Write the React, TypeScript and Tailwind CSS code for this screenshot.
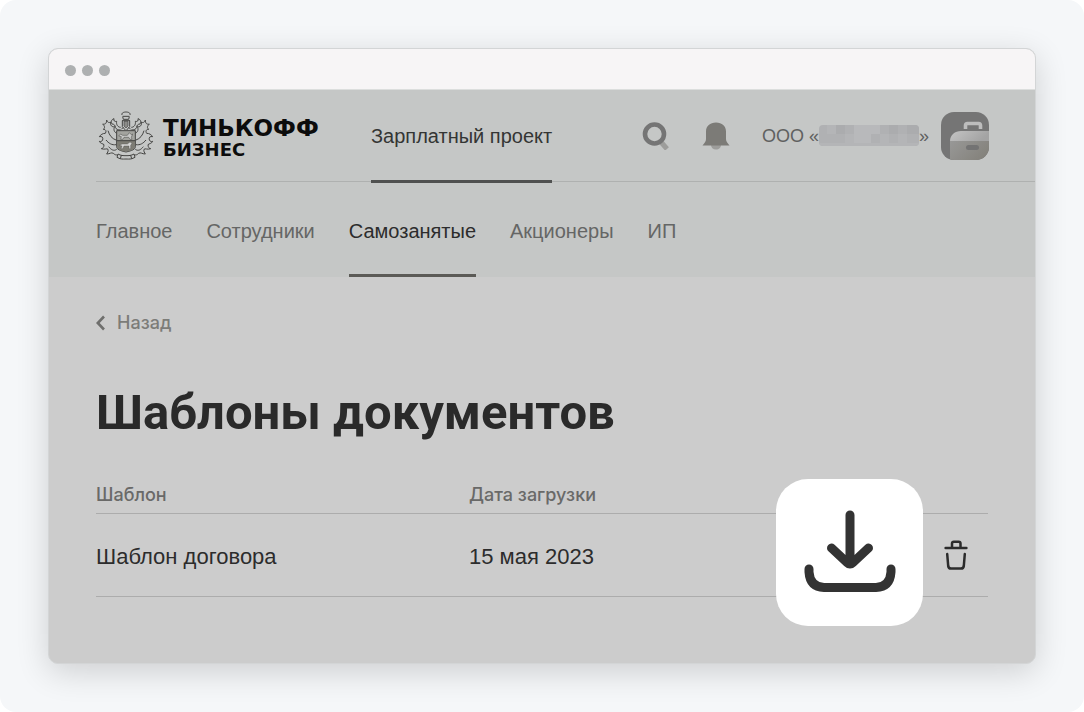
import React from "react";

const tabs = [
  { title: "Главное", active: false },
  { title: "Сотрудники", active: false },
  { title: "Самозанятые", active: true },
  { title: "Акционеры", active: false },
  { title: "ИП", active: false },
];

const templates = [{ name: "Шаблон договора", date: "15 мая 2023" }];

// left half of the crest, the right one is mirrored
const CrestHalf = () => (
  <g>
    <path d="M62 76C54 72 52 64 56 56C48 58 42 52 44 42C38 46 34 42 32 36C32 46 28 50 20 48C26 54 28 60 22 64C30 64 32 70 28 76C20 76 14 80 10 86C18 84 22 88 20 96C18 100 14 102 10 100C14 108 20 106 24 110C24 118 20 122 16 122C26 126 32 120 36 124C38 130 34 134 32 138C42 138 46 132 52 136C56 140 60 142 64 140" />
    <path d="M60 96C48 92 40 82 36 68M60 110C48 112 38 106 30 96M62 124C54 130 46 126 38 116" />
    <path d="M74 58C66 58 60 50 62 40C56 42 52 38 54 32C46 34 44 42 48 48C54 48 58 52 58 58C60 64 66 66 74 66" />
    <path d="M80 26L82 34H90M78 38H90M79 38V56L88 66M76 64L82 58" />
    <path d="M78 21C76 14 84 12 90 12M80 25H90" />
    <path d="M66 138C74 143 82 143 90 143M66 138L63 148L72 152C80 154 86 153 90 153M76 142L73 152" />
  </g>
);

const Crest = () => (
  <svg
    viewBox="0 0 180 168"
    className="w-15 h-14 shrink-0"
    fill="none"
    stroke="#444442"
    strokeWidth="3"
    aria-hidden="true"
  >
    <CrestHalf />
    <g transform="translate(180 0) scale(-1 1)">
      <CrestHalf />
    </g>
    <path
      d="M62 68H118V116C118 124 108 128 90 132C72 128 62 124 62 116Z"
      fill="#a3a49f"
    />
    <path
      d="M63 98H117V116C117 123 107 127 90 131C73 127 63 123 63 116Z"
      fill="#7d7c74"
      stroke="none"
    />
    <path d="M62 98H118" />
    <path
      d="M68 84L74 78L80 82H94L100 74L106 80L110 78L106 88L108 94H102L98 88H84L80 94H74L76 86Z"
      fill="#c8c9c7"
      strokeWidth="1.5"
    />
    <path
      d="M70 112L78 108H94L102 102L108 106L104 112V122H99V114H84L80 122H75L78 114Z"
      fill="#d4d4d2"
      strokeWidth="1"
    />
    <path d="M84 40H96V54L90 60L84 54Z" fill="#8b8b88" strokeWidth="2" />
  </svg>
);

const SearchIcon = () => (
  <svg viewBox="0 0 28 28" className="w-7 h-7" fill="none" aria-hidden="true">
    <path d="M19 20L25 27" stroke="#9d9d9b" strokeWidth="5" />
    <circle cx="12.5" cy="12" r="9.5" stroke="#757575" strokeWidth="4.6" />
  </svg>
);

const BellIcon = () => (
  <svg viewBox="0 0 28 28" className="w-7 h-7" aria-hidden="true">
    <path d="M9 23H19C19 25.500 17 27.500 14 27.500S9 25.500 9 23Z" fill="#9d9d9b" />
    <path
      d="M14 .500C20 .500 24 4 24 9.500V17C24 19.500 25.500 21 27.500 23.500H.500C2.500 21 4 19.500 4 17V9.500C4 4 8 .500 14 .500Z"
      fill="#7c7b77"
    />
  </svg>
);

const CompanyIcon = () => (
  <svg viewBox="0 0 48 48" className="w-12 h-12" aria-hidden="true">
    <defs>
      <clipPath id="company">
        <rect width="48" height="48" rx="13" />
      </clipPath>
      <linearGradient id="lid" x1="0" y1="0" x2="1" y2="0.3">
        <stop offset="0" stopColor="#c4c4c4" />
        <stop offset="1" stopColor="#a3a3a3" />
      </linearGradient>
      <linearGradient id="case" x1="0" y1="0" x2="1" y2="0.5">
        <stop offset="0" stopColor="#989897" />
        <stop offset="1" stopColor="#85837d" />
      </linearGradient>
    </defs>
    <g clipPath="url(#company)">
      <rect width="48" height="48" fill="#757575" />
      <path
        d="M24.500 17V13.500Q24.500 11.500 26.500 11.500H37.500Q39.500 11.500 39.500 13.500V17"
        fill="none"
        stroke="#bdbdbd"
        strokeWidth="3.6"
      />
      <path d="M9 29C9 23 14 19 20 19H48V29Z" fill="url(#lid)" />
      <rect x="9" y="29" width="39" height="19" fill="url(#case)" />
      <rect x="25" y="33" width="13" height="5" rx="2.500" fill="#737373" />
    </g>
  </svg>
);

// company name is hidden behind a mosaic
const HiddenName = () => (
  <svg viewBox="0 0 100 21" className="w-[100px] h-[21px]" aria-hidden="true">
    <defs>
      <clipPath id="mosaic">
        <rect width="100" height="21" rx="4" />
      </clipPath>
    </defs>
    <g clipPath="url(#mosaic)">
      <rect width="100" height="21" fill="#b0b1b3" />
      <path d="M8 0H17V9H8ZM26 9H35V18H26ZM61 9H70V18H61ZM79 9H88V21H79Z" fill="#b4b5b7" />
      <path d="M17 0H26V9H17ZM70 0H79V9H70ZM88 0H100V9H88Z" fill="#abacae" />
      <path d="M35 9H44V18H35ZM35 0H61V9H35ZM44 9H52V18H44Z" fill="#b8b9bb" />
      <rect y="18" width="100" height="3" fill="#b4b5b7" />
    </g>
  </svg>
);

const DownloadIcon = () => (
  <svg
    viewBox="0 0 92 84"
    className="w-[92px] h-[84px]"
    fill="none"
    stroke="#333"
    strokeWidth="9"
    strokeLinecap="round"
    strokeLinejoin="round"
    aria-hidden="true"
  >
    <path d="M46 5V54M27.500 38L43 52.500Q46 55.500 49 52.500L64.500 38" />
    <path d="M5 59V62Q6 77 20 77.500H72Q86 77 87 62V59" />
  </svg>
);

const TrashIcon = () => (
  <svg
    viewBox="0 0 24 30"
    className="w-6 h-[30px]"
    fill="none"
    stroke="#2b2b2b"
    strokeWidth="2.5"
    strokeLinecap="round"
    strokeLinejoin="round"
    aria-hidden="true"
  >
    <path d="M1.600 8H22.400M8 7.500V3.500Q8 1.700 9.800 1.700H14.700Q16.500 1.700 16.500 3.500V7.500" />
    <path d="M3.200 14L4.200 26Q4.500 28.600 7 28.600H17Q19.500 28.600 19.800 26L20.800 14" />
  </svg>
);

const Header = () => (
  <header className="bg-[#c5c7c6] font-['Liberation_Sans',sans-serif]">
    <div className="ml-[47px] pr-[46px] h-[92px] flex items-center border-b border-[#afb1b0]">
      <a href="#" className="flex items-center gap-[7px] w-[275px] text-[#0c0c0c]">
        <Crest />
        <span className="flex flex-col pt-1 font-['DejaVu_Sans'] font-bold">
          <span className="text-[23px] leading-6">ТИНЬКОФФ</span>
          <span className="text-[18px] leading-5">БИЗНЕС</span>
        </span>
      </a>
      <a
        href="#"
        className="h-[95px] pt-1 flex items-center border-b-3 border-[#505150] text-xl text-[#343534] whitespace-nowrap"
      >
        Зарплатный проект
      </a>
      <div className="ml-auto flex items-center">
        <button type="button" aria-label="Поиск" className="mr-8">
          <SearchIcon />
        </button>
        <button type="button" aria-label="Уведомления" className="mr-8">
          <BellIcon />
        </button>
        <button
          type="button"
          className="flex items-center text-lg text-[#606160] whitespace-nowrap"
        >
          ООО «<HiddenName />»
          <span className="ml-3">
            <CompanyIcon />
          </span>
        </button>
      </div>
    </div>
    <nav className="ml-[47px] h-[95px] flex gap-[34px] text-xl">
      {tabs.map((item) => (
        <a
          key={item.title}
          href="#"
          className={`flex items-center border-b-3 pt-1.5 ${
            item.active
              ? "border-[#5b5a56] text-[#2c2c2c]"
              : "border-transparent text-[#656665]"
          }`}
        >
          {item.title}
        </a>
      ))}
    </nav>
  </header>
);

const Templates = () => (
  <main className="px-[47px] pt-8 pb-[66px]">
    <a
      href="#"
      className="flex w-fit items-center gap-3 text-lg leading-7 font-medium text-[#7c7c79]"
    >
      <svg
        viewBox="0 0 9 16"
        className="w-[9px] h-4"
        fill="none"
        stroke="#6f6f6d"
        strokeWidth="2.6"
        aria-hidden="true"
      >
        <path d="M8 1.500L1.800 8L8 14.500" />
      </svg>
      Назад
    </a>
    <h1 className="mt-12 text-[49px] leading-[56px] font-bold font-[Roboto] text-[#2a2a2a]">
      Шаблоны документов
    </h1>
    <table className="mt-8 w-full table-fixed border-collapse text-left">
      <thead>
        <tr className="h-10 border-b border-[#acacac] text-lg text-[#696968]">
          <th className="w-[373px] p-0 pt-1 font-medium">Шаблон</th>
          <th className="p-0 pt-1 font-medium">Дата загрузки</th>
          <th className="w-[212px] p-0" />
        </tr>
      </thead>
      <tbody>
        {templates.map((item) => (
          <tr
            key={item.name}
            className="h-[83px] border-b border-[#acacac] font-['Liberation_Sans',sans-serif] text-[22px] text-[#2c2c2c]"
          >
            <td className="p-0 pt-1">{item.name}</td>
            <td className="p-0 pt-1">{item.date}</td>
            <td className="relative p-0">
              <button
                type="button"
                aria-label="Скачать"
                className="absolute left-0 -top-[35px] flex size-[147px] items-center justify-center rounded-[32px] bg-white"
              >
                <DownloadIcon />
              </button>
              <button
                type="button"
                aria-label="Удалить"
                className="ml-auto mr-5 block"
              >
                <TrashIcon />
              </button>
            </td>
          </tr>
        ))}
      </tbody>
    </table>
  </main>
);

const App = () => {
  return (
    <div className="min-h-screen rounded-2xl bg-[#f5f7f9] p-12 font-[Inter,sans-serif]">
      <div className="overflow-hidden rounded-[10px] border border-[#d3d5d6] bg-[#ccc] shadow-[0_8px_32px_rgba(0,0,0,0.16)]">
        <div className="flex h-[41px] items-center gap-1.5 border-b border-[#dcdedd] bg-[#f7f5f6] px-4 pt-0.5">
          <span className="size-[11px] rounded-full bg-[#aeb0b1]" />
          <span className="size-[11px] rounded-full bg-[#aeb0b1]" />
          <span className="size-[11px] rounded-full bg-[#aeb0b1]" />
        </div>
        <Header />
        <Templates />
      </div>
    </div>
  );
};

export default App;
